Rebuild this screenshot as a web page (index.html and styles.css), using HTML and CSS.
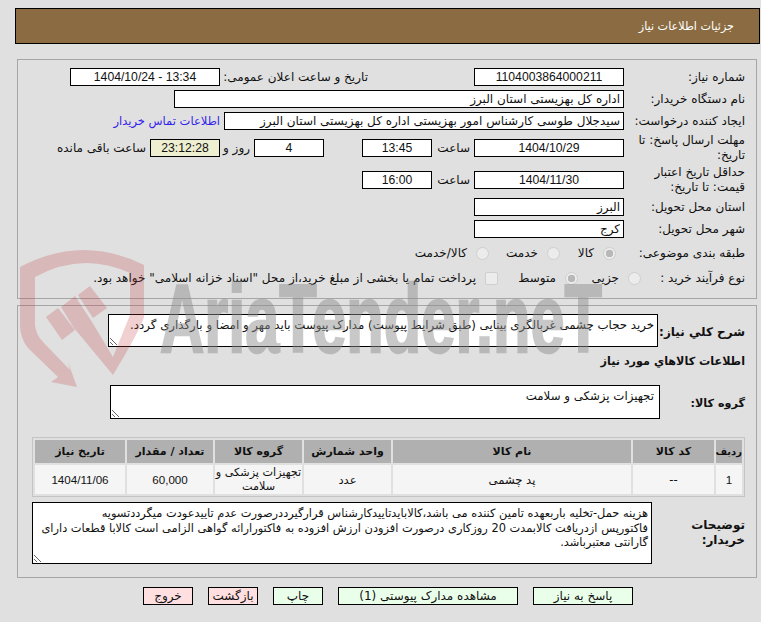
FILE: index.html
```html
<!DOCTYPE html>
<html lang="fa" dir="rtl">
<head>
<meta charset="utf-8">
<title>جزئیات اطلاعات نیاز</title>
<link rel="stylesheet" href="styles.css">
</head>
<body>
<header class="title-bar"><h1>جزئیات اطلاعات نیاز</h1></header>

<section class="panel panel-top">
  <div class="row">
    <label class="lbl">شماره نیاز:</label>
    <input class="field w150 center" readonly value="1104003864000211">
    <label class="lbl-public">تاریخ و ساعت اعلان عمومی:</label>
    <input class="field w150 center" readonly value="1404/10/24 - 13:34">
  </div>
  <div class="row">
    <label class="lbl">نام دستگاه خریدار:</label>
    <input class="field w450" readonly value="اداره کل بهزیستی استان البرز">
  </div>
  <div class="row mb2">
    <label class="lbl">ایجاد کننده درخواست:</label>
    <input class="field w400" readonly value="سیدجلال طوسی کارشناس امور بهزیستی اداره کل بهزیستی استان البرز">
    <a class="contact" href="#">اطلاعات تماس خریدار</a>
  </div>
  <div class="row tall">
    <label class="lbl">مهلت ارسال پاسخ: تا تاریخ:</label>
    <input class="field w150 center" readonly value="1404/10/29">
    <span class="hour">ساعت</span>
    <input class="field w70 center" readonly value="13:45">
    <input class="field w70 center days" readonly value="4">
    <span class="day-word">روز و</span>
    <input class="field w70 center timer" readonly value="23:12:28">
    <span class="remain">ساعت باقی مانده</span>
  </div>
  <div class="row tall mb2">
    <label class="lbl">حداقل تاریخ اعتبار قیمت: تا تاریخ:</label>
    <input class="field w150 center" readonly value="1404/11/30">
    <span class="hour">ساعت</span>
    <input class="field w70 center" readonly value="16:00">
  </div>
  <div class="row">
    <label class="lbl">استان محل تحویل:</label>
    <input class="field w150" readonly value="البرز">
  </div>
  <div class="row mb6">
    <label class="lbl">شهر محل تحویل:</label>
    <input class="field w150" readonly value="کرج">
  </div>
  <div class="row choice mb6">
    <label class="lbl">طبقه بندی موضوعی:</label>
    <div class="opts">
      <span class="opt o1"><input type="radio" disabled checked name="c"><span>کالا</span></span>
      <span class="opt o2"><input type="radio" disabled name="c"><span>خدمت</span></span>
      <span class="opt o3"><input type="radio" disabled name="c"><span>کالا/خدمت</span></span>
    </div>
  </div>
  <div class="row choice proc">
    <label class="lbl">نوع فرآیند خرید :</label>
    <div class="opts">
      <span class="opt o4"><input type="radio" disabled name="p"><span>جزیی</span></span>
      <span class="opt o5"><input type="radio" disabled checked name="p"><span>متوسط</span></span>
      <span class="opt o6"><input type="checkbox" disabled><span>پرداخت تمام یا بخشی از مبلغ خرید،از محل "اسناد خزانه اسلامی" خواهد بود.</span></span>
    </div>
  </div>
</section>

<section class="panel panel-bottom">
  <div class="row desc-row">
    <label class="lbl-bold w-sharh">شرح کلي نیاز:</label>
    <textarea class="area area-sharh" readonly>خرید حجاب چشمی غربالگری بینایی (طبق شرایط پیوست) مدارک پیوست باید مهر و امضا و بارگذاری گردد.</textarea>
  </div>
  <h2 class="lbl-bold small-bold items-title">اطلاعات کالاهاي مورد نیاز</h2>
  <div class="row group-row">
    <label class="lbl-bold small-bold w-group">گروه کالا:</label>
    <textarea class="area area-group" readonly>تجهیزات پزشکی و سلامت</textarea>
  </div>
  <table class="items">
    <thead>
      <tr><th class="c1">ردیف</th><th class="c2">کد کالا</th><th class="c3">نام کالا</th><th class="c4">واحد شمارش</th><th class="c5">گروه کالا</th><th class="c6">تعداد / مقدار</th><th class="c7">تاریخ نیاز</th></tr>
    </thead>
    <tbody>
      <tr><td class="num">1</td><td>--</td><td>پد چشمی</td><td>عدد</td><td class="wrap">تجهیزات پزشکی و سلامت</td><td class="num">60,000</td><td class="num">1404/11/06</td></tr>
    </tbody>
  </table>
  <div class="row notes-row">
    <label class="lbl-bold w-notes">توضیحات خریدار:</label>
    <textarea class="area area-notes" readonly>هزینه حمل-تخلیه باربعهده تامین کننده می باشد،کالابایدتاییدکارشناس قرارگیرددرصورت عدم تاییدعودت میگرددتسویه
فاکتورپس ازدریافت کالابمدت 20 روزکاری درصورت افزودن ارزش افزوده به فاکتورارائه گواهی الزامی است کالابا قطعات دارای
گارانتی معتبرباشد.</textarea>
  </div>
</section>

<nav class="actions">
  <button class="btn go w100">پاسخ به نیاز</button>
  <button class="btn go w180">مشاهده مدارک پیوستی (1)</button>
  <button class="btn go w50">چاپ</button>
  <button class="btn stop w50">بازگشت</button>
  <button class="btn stop w50">خروج</button>
</nav>

<svg class="watermark" viewBox="0 0 761 622" width="761" height="622" aria-hidden="true">
  <path class="wm-red" d="M20 267 Q82 234 144 265 L144 317 Q140 330 113 375 L74 328 L61 307 L75 296 L92 322 L113 357 L130 315 L130 273 Q82 251 35 277 L35 325 Q36 335 43 342 L70 370 L68 362 L77 387 L51 382 L58 377 L28 348 Q20 338 20 325 Z"/>
  <path class="wm-red" d="M46 317 L58 308 L75 330 L62 340 Z"/>
  <path class="wm-red" d="M78 295 L90 286 L107 308 L93 318 Z"/>
  <text class="wm-text" x="160" y="352" textLength="442" lengthAdjust="spacingAndGlyphs" dir="ltr">AriaTender.neT</text>
</svg>
</body>
</html>
```
FILE: styles.css
```css
* { box-sizing: border-box; }
html, body { margin: 0; height: 622px; overflow: hidden; background: #e0e0e0; }
body {
  position: relative;
  font-family: "DejaVu Sans", sans-serif;
  font-size: 12px;
  color: #111;
  direction: rtl;
}
.title-bar {
  margin: 8px 1px 0 15px;
  height: 36px;
  background: #8b6c42;
  border: 1px solid #000;
  display: flex;
  align-items: center;
  padding-right: 25px;
}
.title-bar h1 { margin: 0; font-size: 11.2px; font-weight: normal; color: #fff; }
.panel {
  margin: 0 4px 0 17px;
  border: 1px solid #a6a6a6;
  padding: 0 11px 0 0;
}
.panel-top { margin-top: 15px; height: 240px; padding-top: 8px; }
.panel-bottom { margin-top: 6px; height: 273px; padding-top: 8px; }
.row { display: flex; align-items: center; height: 18px; margin-bottom: 4px; }
.mb2 { margin-bottom: 2px; }
.mb6 { margin-bottom: 6px; }
.tall { height: 32px; margin-bottom: 0; }
.tall.mb2 { margin-bottom: 2px; }
.lbl { width: 121px; flex: none; line-height: 15px; }
.field {
  height: 18px;
  border: 1px solid #000;
  background: #fff;
  font: inherit;
  font-size: 12px;
  color: #111;
  padding: 0 3px;
  text-align: right;
  direction: rtl;
  outline: none;
  flex: none;
}
.center {
  direction: ltr;
  text-align: center;
  font-size: 12.2px;
  font-family: "Liberation Sans", "DejaVu Sans", sans-serif;
}
.w150 { width: 150px; }
.w450 { width: 450px; }
.w400 { width: 400px; }
.w70 { width: 70px; }
.lbl-public { margin-right: 106px; width: 144px; flex: none; margin-left: 4px; white-space: nowrap; }
.contact { color: #3322ee; text-decoration: none; margin-right: 4px; white-space: nowrap; font-size: 11.5px; }
.hour { width: 38px; margin-right: 4px; flex: none; }
.days { margin-right: 38px; }
.day-word { width: 30px; margin-right: 4px; flex: none; }
.timer { background: #eeeed0; }
.remain { margin-right: 4px; white-space: nowrap; }
.opts { flex: 1; display: flex; height: 20px; align-items: center; min-width: 0; }
.opt { display: flex; align-items: center; flex: none; white-space: nowrap; }
.opt input {
  appearance: none;
  -webkit-appearance: none;
  width: 13px;
  height: 13px;
  margin: 0;
  border: 1px solid #cfcfcf;
  border-radius: 50%;
  background: #ececec;
  flex: none;
}
.opt input:checked { background: radial-gradient(circle, #b8b8b8 0 3.5px, #ececec 4px); }
.opt input[type=checkbox] { border-radius: 2px; }
.opt span { margin-right: 9px; }
.proc { height: 20px; }
.o1 { margin-right: 8px; width: 56px; }
.o2 { width: 71px; }
.o4 { margin-right: -17px; width: 63px; }
.o5 { width: 80px; }
.lbl-bold { font-weight: bold; margin: 0; font-size: 12px; flex: none; line-height: 15px; }
.small-bold { font-size: 11.2px; }
.desc-row { height: 33px; margin-bottom: 7px; }
.w-sharh { width: 87px; margin-top: 3px; }
.area {
  border: 1px solid #000;
  background: #fff;
  font: inherit;
  font-size: 11.77px;
  line-height: 14px;
  color: #111;
  padding: 3px;
  outline: none;
  overflow: hidden;
  flex: none;
  direction: rtl;
}
.area-sharh { width: 550px; height: 33px; }
.items-title { height: 15px; margin-bottom: 16px; }
.group-row { height: 34px; margin-bottom: 18px; }
.w-group { width: 85px; margin-top: 3px; }
.area-group { width: 550px; height: 34px; padding-right: 5px; }
.items {
  width: 713px;
  height: 60px;
  margin: 0 0 5px 0;
  table-layout: fixed;
  border-collapse: separate;
  border-spacing: 2px;
  border: 1px solid #c4c4c4;
  background: #e0e0e0;
}
.items th { background: #b0b0b0; height: 23px; padding: 0; font-size: 11px; color: #111; }
.items th.c1 { font-size: 10px; }
.items td { background: #f5f5f5; padding: 0; text-align: center; line-height: 14px; font-size: 11.6px; }
.items td.wrap { font-size: 11.2px; }
.items td.num { font-family: "Liberation Sans", "DejaVu Sans", sans-serif; font-size: 11.6px; }
.c1 { width: 26px; }
.c2 { width: 81px; }
.c3 { width: 238px; }
.c4 { width: 87px; }
.c5 { width: 87px; }
.c6 { width: 86px; }
.c7 { width: 90px; }
.notes-row { height: 62px; margin: 0; }
.w-notes { width: 93px; }
.area-notes { width: 620px; height: 62px; line-height: 14.5px; white-space: pre; font-size: 11.4px; }
.actions { display: flex; gap: 15px; margin: 9px 128px 0 0; }
.btn {
  height: 18px;
  border: 1px solid #000;
  font: inherit;
  color: #111;
  padding: 0;
  flex: none;
}
.go { background: #eaffea; }
.stop { background: #ffdfe0; }
.w100 { width: 100px; }
.w180 { width: 180px; }
.w50 { width: 50px; }
.watermark { position: absolute; left: 0; top: 0; pointer-events: none; direction: ltr; }
.wm-red { fill: rgba(190, 50, 50, 0.23); }
.wm-text {
  font-family: "Liberation Sans", sans-serif;
  font-weight: bold;
  font-size: 96px;
  fill: #8d8d8d;
  stroke: #8d8d8d;
  stroke-width: 2.5px;
  opacity: 0.48;
}
```
